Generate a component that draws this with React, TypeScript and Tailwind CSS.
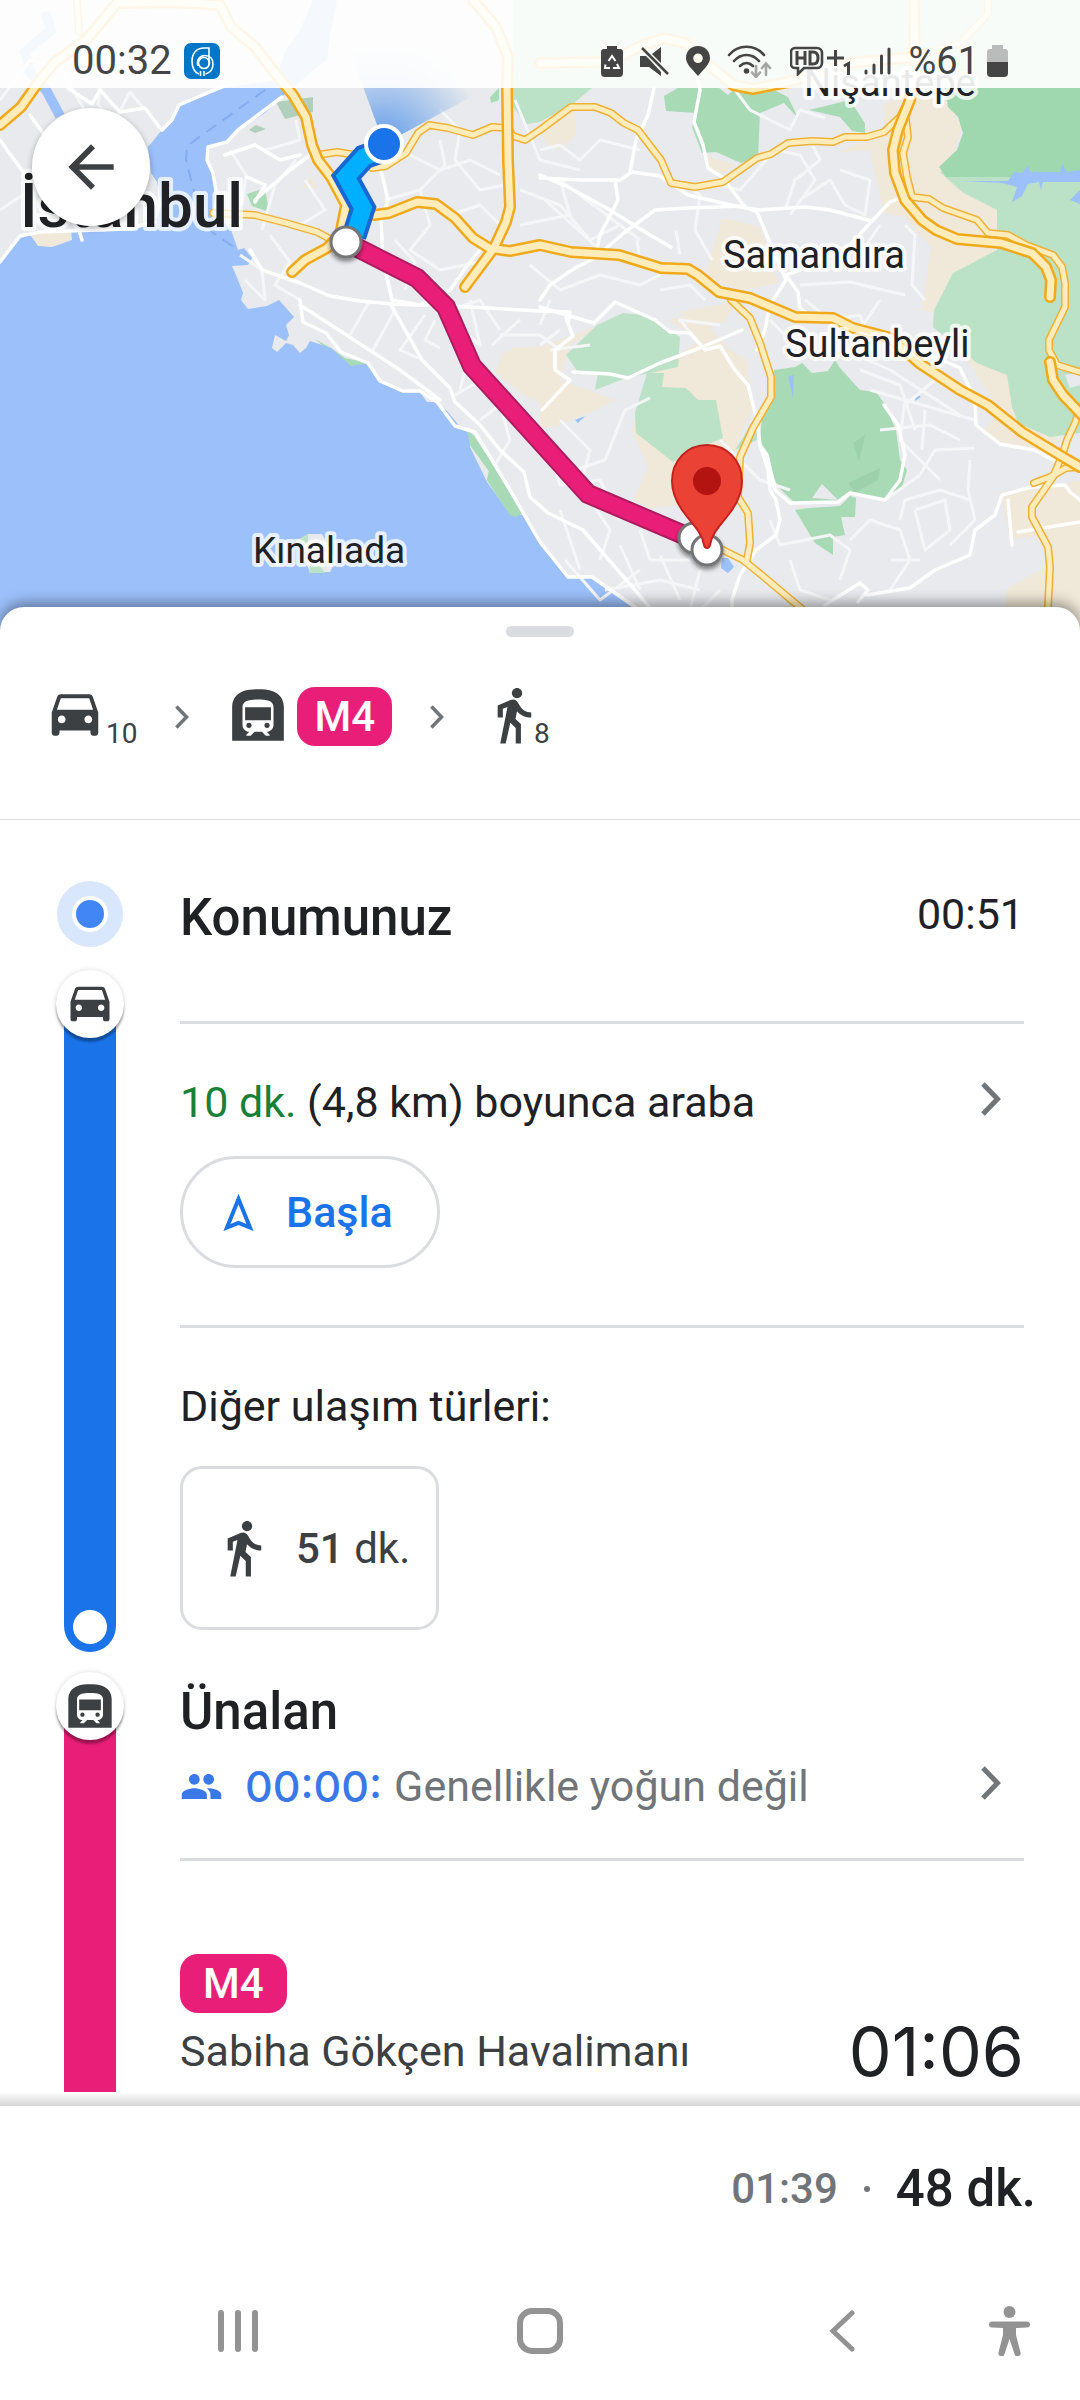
import { useState } from "react";
import type { ReactNode } from "react";
import { MdArrowBack, MdPeople, MdSubway } from "react-icons/md";

const majorRoads = [
  "M0 125L21 107L40 80L55 62L86 40L103 20L117 3L172 2L220 5L231 27L255 47L275 73L293 95L306 117L312 145L318 160L331 177L346 205L340 235L327 248L305 260L292 272",
  "M473 0L496 27L508 57L507 88L508 160L510 207L506 222L494 248L465 287",
  "M374 215L389 213L417 202L436 204L455 218L473 238L489 248L510 251L540 245L571 252L619 255L661 268L688 269L698 275L719 292L750 298L795 317L833 318L853 328L891 338L919 363L960 390L988 405L1022 432L1063 457L1080 467",
  "M914 0L915 67L910 100L898 130L893 150L895 173L905 200L922 220L936 230L957 239L1001 243L1032 253L1046 267L1051 280L1050 297",
  "M540 63L609 62L643 45L664 38L685 43L709 65L733 85L753 89L788 82L850 63L914 57",
  "M1050 362L1053 380L1063 395L1082 415",
];

const minorHighways = [
  "M213 213L255 215L286 223L317 232L332 240",
  "M317 155L337 152L355 155L372 168L386 166L406 153L418 133L429 125L448 128L473 135L492 127L508 128L513 136L525 140L540 130L571 107L595 107L611 113L624 123L638 130L661 160L671 183L695 187L723 182L757 158L771 154L788 143L812 141L833 142L845 137L867 137L884 132L900 117L910 97",
  "M905 112L908 137L903 153L907 177L912 197L929 199L943 208L977 220L988 233L1008 235L1026 245L1053 255L1062 267L1065 283L1065 307L1049 340L1049 350L1057 365L1080 372",
  "M1078 415L1075 423L1067 440L1063 453L1053 477L1032 507L1032 517L1048 547L1050 567L1048 607L1048 640",
  "M1034 483L1050 477L1066 468L1080 467",
  "M731 300L750 318L760 343L771 377L771 397L753 428L740 457L738 497L748 513L750 543L747 560",
  "M719 548L743 560L764 577L802 609L830 640",
  "M77 0L79 32",
  "M988 0L988 14L960 43L914 57",
];

const streets = [
  "M0 262L20 236L40 232L127 229L155 222",
  "M162 130L172 120L179 105L224 86",
  "M0 140L26 176L62 185M30 115L55 150L82 240M68 88L92 104L100 90L120 112L145 108L160 128",
  "M282 97L238 130L227 142L208 147L207 160L213 173L217 197L215 213",
  "M300 300L303 322L326 333L341 352L368 363L380 381L403 391L420 391L437 402L455 426L475 432L510 490L540 542L568 577L592 577L635 607L660 640",
  "M300 305L345 334L400 370L440 400M391 305L422 360L450 388L455 402L480 425L500 450L524 472L530 497L548 513L583 530L635 590L660 620",
  "M381 170L388 200L381 220L383 260L392 300L420 305L450 290L470 262L480 250",
  "M250 250L262 270L300 283L330 296L360 301L392 304L470 307L540 311L570 312L568 322",
  "M255 200L290 170L310 155M247 177L265 185L255 202M225 155L255 145L280 160L300 155",
  "M540 175L570 188L610 210L650 235L671 247M540 178L580 180L620 180L632 172L660 176L688 195L740 207L759 210L805 207L830 210L872 221L890 202L900 198",
  "M654 88L648 115L636 140L630 172M697 76L700 90L694 122L703 145L708 168L722 177L745 207L757 212L773 250L786 280L770 305L765 330L757 350",
  "M540 300L550 285L575 268L595 258L600 235L618 200L615 180M595 258L625 232L655 210L688 208L745 206",
  "M872 221L850 245L800 270L786 275L798 292L800 308L812 318",
  "M540 307L566 315L594 323L615 302L655 320L670 332L690 333L705 350L720 346L735 370L748 385L757 420L760 445L768 470L770 490L776 500L780 520L776 535L756 550L740 575L732 600L732 610",
  "M566 318L573 336L555 350L555 370L570 380L542 410",
  "M573 372L610 374L628 378L660 363L700 348L742 330",
  "M760 445L767 455L775 490L790 503L838 502L850 493L885 500L900 480L905 455L898 425L884 405",
  "M919 350L960 368L975 400L976 425L1000 444L1034 450L1063 465",
  "M867 595L910 588L935 570L970 555L975 530L995 515L1002 495L1032 487L1065 485L1070 492L1080 500M1008 500L1012 545M1018 532L1080 522",
  "M730 610L725 640M825 605L860 583L868 590L858 602",
];

const lanes = [
  "M0 100L30 60L62 70L90 120M100 88L98 105L115 120L130 92L145 110M120 50L150 70L190 62L210 80M0 210L30 190L62 205",
  "M230 150L246 175L242 205M265 150L300 140L296 120M296 160L275 185L262 230M240 255L262 270L265 300L245 280M270 235L290 262L275 285L300 300M305 180L325 210L300 225",
  "M385 200L420 190L445 165L440 140M420 190L430 225L410 250L440 270L480 262M400 150L440 170L470 160L500 175M440 110L460 130L455 160L480 190L505 185M450 215L480 205L500 225M395 240L415 262L405 290M430 290L450 310L480 300L500 330",
  "M515 100L540 160L580 170M520 190L560 205L590 240L620 225M520 225L570 215L560 180M540 150L560 145L580 160L600 140L640 150M545 200L600 250M560 180L640 240M530 265L560 290L600 275L640 285L660 275",
  "M370 300L350 335M395 310L373 350M425 315L400 350L418 358M435 320L425 340L440 348M455 325L480 345L470 300M520 320L492 345M470 350L460 390M500 335L540 335L560 350M455 395L490 375M480 420L500 405L510 440L495 465",
  "M550 350L590 345M680 180L700 195L695 230L712 260M720 185L740 190L775 150L800 155L815 180L790 215M840 170L870 180L865 215L845 205L830 180L800 200M785 210L795 180L820 160L810 140M735 90L750 110L790 130L800 110L825 118",
  "M660 290L690 285L705 300M640 260L637 240M676 230L680 255M800 285L850 282L905 295M805 300L830 320L860 315L870 345M850 270L880 225M905 225L915 235L912 285L925 300M880 300L860 330",
  "M560 420L590 450L582 480L610 500M575 470L605 460L625 410L650 398M545 440L560 485L600 480L620 520M590 500L610 530L600 560M560 510L580 570M620 545L640 590M640 530L650 560L690 560M660 555L680 600M700 570L690 610M605 590L660 580L700 590M565 560L600 600L640 570",
  "M770 520L780 545L830 535L850 550L840 580M790 560L800 590L830 600M850 540L870 520L900 530L910 560L890 590M900 520L905 500L940 490L970 500M885 500L920 475L935 450L975 448M880 430L930 425L960 440M905 400L900 440L940 480M925 410L922 450M860 370L900 385L915 430M870 390L940 410L975 420M935 380L905 405M845 350L890 370L960 415M970 460L968 490L975 520L950 545M890 560L920 560M915 510L945 500L950 530L925 550L915 510",
  "M560 330L540 345M550 300L540 325M700 345L680 320L720 325M770 320L800 350M720 440L760 480L790 490M690 620L720 590",
];

function RoadGroup({ paths, casing, fill, outer, inner }: { paths: string[]; casing: string; fill: string; outer: number; inner: number }) {
  return (
    <g fill="none" strokeLinecap="round" strokeLinejoin="round">
      {paths.map((d) => <path key={d} d={d} stroke={casing} strokeWidth={outer} />)}
      {paths.map((d) => <path key={d + "i"} d={d} stroke={fill} strokeWidth={inner} />)}
    </g>
  );
}

function RouteMap() {
  return (
    <svg viewBox="0 0 1080 640" preserveAspectRatio="xMidYMin slice" className="block h-full w-full" role="img" aria-label="Harita">
      <defs>
        <radialGradient id="beam" gradientUnits="userSpaceOnUse" cx="384" cy="144" r="100">
          <stop offset="0" stopColor="#1a73e8" stopOpacity=".65" />
          <stop offset="1" stopColor="#1a73e8" stopOpacity="0" />
        </radialGradient>
        <filter id="markerShadow" x="-50%" y="-50%" width="200%" height="200%">
          <feDropShadow dx="0" dy="3" stdDeviation="2" floodOpacity=".45" />
        </filter>
      </defs>
      <rect width="1080" height="640" fill="#e8eaed" />

      {/* dry land */}
      <g fill="#f0e8d8">
        <path d="M884 104L905 97L946 100L962 127L953 153L940 167L962 192L997 210L997 250L953 273L932 312L922 310L931 247L905 217L884 213L870 150L838 152L884 133Z" />
        <path d="M722 218L760 227L778 283L743 290L705 277Z" />
        <path d="M540 120L576 104L576 135L560 150L545 143ZM580 100L600 88L622 92L640 88L650 98L610 106ZM705 155L735 165L720 175L708 170Z" />
        <path d="M502 354L516 347L540 347L600 325L570 345L560 380L615 400L600 408L560 425L540 428L540 403L525 395L495 373Z" />
        <path d="M668 320L715 310L712 330L728 348L746 360L753 405L735 450L735 500L650 508L633 500L648 467L632 430L650 375L700 340Z" />
        <path d="M28 233L72 230L72 240L52 247L38 246Z" />
        <path d="M960 350L1010 372L1012 408L1060 440L1050 450L1000 445L985 430L1000 410Z" />
        <path d="M1000 492L1035 490L1080 480L1080 640L1005 640L1006 590L1048 565L1040 535L1010 540Z" />
        <path d="M680 312L735 302L725 322L690 330ZM302 188L310 176L318 188Z" />
        <path d="M795 500L830 535L815 540Z" />
      </g>

      {/* parks and forests */}
      <g fill="#a8dab5">
        <path d="M276 102L313 97L313 112L285 119Z" fill="#b0cfbd" />
        <path d="M249 130L256 125L266 129L255 133Z" fill="#b0cfbd" />
        <path d="M247 194L265 188L269 212L252 206Z" />
        <path d="M490 97L499 88L499 100L491 103Z" />
        <path d="M664 96L678 88L719 88L728 95L736 88L774 90L788 97L798 118L784 103L760 113L758 157L741 163L716 152L702 153L692 127L697 113L666 111Z" />
        <path d="M809 110L822 100L850 100L865 123L865 133L852 131L840 117Z" />
        <path d="M774 370L795 367L802 363L812 373L828 371L835 360L840 368L860 390L876 392L884 403L896 430L900 460L907 470L902 487L884 500L850 493L833 503L795 503L778 487L767 460L760 440L762 417L774 397Z" />
        <path d="M795 510L809 508L840 506L850 496L856 498L855 517L841 517L845 535L833 537L833 555L815 543Z" />
        <path d="M315 339L331 348L345 358L368 363L351 367L341 362ZM377 378L390 385L378 382ZM398 392L414 392L405 397Z" />
        <path d="M467 430L474 436L495 468L523 513L516 517L510 515L487 480L489 471L470 445Z" />
      </g>
      <g fill="#bbe2c6">
        <path d="M513 0H1080V88H592L574 103L540 122L527 124L513 107Z" />
        <path d="M940 172L1080 160V433L1050 437L1018 423L1012 407L1007 375L977 363L933 327L934 310L953 273L997 250L997 210L962 192Z" />
        <path d="M566 355L597 325L623 313L643 315L680 337L678 367L626 378L595 390L598 373L578 372Z" />
        <path d="M647 373L664 373L662 387L686 388L698 400L716 400L723 438L695 450L673 462L636 433L635 413Z" />
        <path d="M735 450L757 415L757 440Z" />
      </g>
      <path d="M592 88L640 88L650 98L640 110L605 104L580 103ZM774 88H884V104L865 123L850 100L809 110Z" fill="#e8eaed" />
      <path d="M945 88H1080V177H946L939 167L957 150L963 133L958 117L948 107Z" fill="#9fd8af" />
      <path d="M1065 375L1080 372L1080 385L1070 388Z" fill="#e8eaed" />
      <path d="M853 443L865 435L859 462ZM848 483L880 468L878 480L855 493Z" fill="#9dd1ac" />
      <path d="M812 498L822 484L838 500Z" fill="#e8eaed" />

      {/* sea, strait and lakes */}
      <g fill="#9cc0fa">
        <path d="M0 262L21 235L29 233L38 246L52 247L72 240L71 230L127 229L155 222L162 205L157 182L151 173L148 147L162 130L172 120L179 105L224 88L275 80L286 50L300 30L313 0H337L331 30L327 60L310 73L282 97L265 113L238 130L227 142L208 147L207 160L213 173L217 197L215 213L231 230L238 250L244 248L252 258L248 265L232 266L238 280L243 293L241 300L248 309L267 306L279 300L294 317L286 325L289 335L286 341L275 335L272 348L277 352L286 343L293 345L300 353L306 348L310 341L331 348L351 366L368 363L379 382L403 393L420 392L427 402L437 402L448 412L461 428L472 435L470 447L487 482L510 514L523 515L540 545L568 577L592 577L635 607L665 640H0Z" />
        <path d="M962 181L1008 181L1014 172L1022 173L1028 165L1030 172L1060 172L1062 164L1067 172L1080 170L1080 182L1043 182L1041 190L1039 182L1028 184L1022 196L1012 202L1017 187L1002 183Z" />
        <path d="M788 377L794 375L793 398ZM916 393L921 397L915 401ZM722 558L728 558L734 567L728 573L721 568ZM575 420L585 416L578 423ZM1070 200L1080 190L1080 204Z" />
      </g>
      <path d="M467 430L474 436L495 468L523 513L516 517L510 515L487 480L489 471L470 445Z" fill="#a8dab5" />
      <path d="M45 12L51 30L25 52L30 72L46 90L60 116" fill="none" stroke="#9cc0fa" strokeWidth="10" />
      <path d="M265 90L187 146L186 160L195 195L212 232L238 250" fill="none" stroke="#84abf0" strokeWidth="2" strokeDasharray="12 8" />
      <path d="M296 541L308 534L322 534L328 545L336 560L330 572L310 572Z" fill="#e8eaed" />
      <path d="M296 541L308 534L308 545ZM310 566L320 566L325 573L309 573Z" fill="#bbe2c6" />

      <g fill="none" stroke="#f5f6f8" strokeWidth="3" strokeLinejoin="round">
        {lanes.map((d) => <path key={d} d={d} />)}
      </g>
      <g fill="none" stroke="#ffffff" strokeWidth="3.500" strokeLinejoin="round" strokeLinecap="round">
        {streets.map((d) => <path key={d} d={d} />)}
      </g>
      <RoadGroup paths={minorHighways} casing="#eeb136" fill="#ffecba" outer={8} inner={5} />
      <RoadGroup paths={majorRoads} casing="#f0a91b" fill="#ffecba" outer={12} inner={7} />

      <path d="M384 144L346 40H500L480 92Z" fill="url(#beam)" />

      {/* route legs */}
      <g fill="none" strokeLinejoin="miter">
        <path d="M384 150L364 157L346 177L363 208L354 236" stroke="#1967d2" strokeWidth="25" />
        <path d="M384 150L364 157L346 177L363 208L354 236" stroke="#00b0ff" strokeWidth="17" />
        <path d="M346 242L417 278L446 307L472 366L588 494L691 538" stroke="#ae1b5e" strokeWidth="20" />
        <path d="M346 242L417 278L446 307L472 366L588 494L691 538" stroke="#e91e78" strokeWidth="16" />
      </g>
      <g fill="#ffffff" stroke="#757575" strokeWidth="3" filter="url(#markerShadow)">
        <circle cx="346" cy="242" r="15" />
        <circle cx="694" cy="538" r="15" />
        <circle cx="707" cy="550" r="15" />
      </g>
      <circle cx="384" cy="144" r="18" fill="#1a73e8" stroke="#ffffff" strokeWidth="4" />

      <g fill="#202124" stroke="#ffffff" strokeOpacity=".75" strokeWidth="8" strokeLinejoin="round" paintOrder="stroke" fontFamily="Roboto, sans-serif" fontSize="38">
        <text x="20" y="227" fontSize="62" fontWeight="500">İstanbul</text>
        <text x="804" y="96">Nişantepe</text>
        <text x="723" y="268">Samandıra</text>
        <text x="785" y="357">Sultanbeyli</text>
        <text x="253" y="563" fontSize="37">Kınalıada</text>
      </g>

      <path d="M707 445c-20 0-35 16-35 36c0 14 6 24 13 33c9 12 17 19 19 31c1 4 5 4 6 0c2-12 10-19 19-31c7-9 13-19 13-33c0-20-15-36-35-36z" fill="#ea4335" stroke="#c5221f" strokeWidth="2" />
      <circle cx="707" cy="481" r="14" fill="#b31412" />
    </svg>
  );
}

function CarIcon({ className }: { className: string }) {
  return (
    <svg viewBox="0 0 24 24" fill="currentColor" className={className} aria-hidden="true">
      <path d="M18.92 5.01C18.72 4.42 18.16 4 17.5 4h-11c-.66 0-1.21.42-1.42 1.01L3 11v8c0 .55.45 1 1 1h1c.55 0 1-.45 1-1v-1h12v1c0 .55.45 1 1 1h1c.55 0 1-.45 1-1v-8l-2.08-5.99zM6.85 15.2c-.83 0-1.5-.67-1.5-1.5s.67-1.5 1.5-1.5 1.5.67 1.5 1.5-.67 1.5-1.5 1.5zm10.3 0c-.83 0-1.5-.67-1.5-1.5s.67-1.5 1.5-1.5 1.5.67 1.5 1.5-.67 1.5-1.5 1.5zM5 10l1.5-4.5h11L19 10H5z" />
    </svg>
  );
}

function WalkIcon({ className }: { className: string }) {
  return (
    <svg viewBox="0 0 20 24" fill="currentColor" className={className} aria-hidden="true">
      <path d="M13.5 5.5c1.1 0 2-.9 2-2s-.9-2-2-2-2 .9-2 2 .9 2 2 2zM9.8 8.9L7 23h2.1l1.8-8 2.1 2v6h2v-7.5l-2.1-2 .6-3C14.8 12 16.8 13 19 13v-2c-1.9 0-3.5-1-4.3-2.4l-1-1.6c-.4-.6-1-1-1.7-1-.3 0-.5.1-.8.1L6 8.3V13h2V9.6l1.8-.7" />
    </svg>
  );
}

function Chevron({ className }: { className: string }) {
  return (
    <svg viewBox="0 0 20 34" fill="none" stroke="currentColor" strokeWidth="5" className={className} aria-hidden="true">
      <path d="M2 2L16.500 17L2 32" />
    </svg>
  );
}

function StatusBar() {
  return (
    <div className="absolute inset-x-0 top-0 flex h-[88px] items-center justify-between bg-white/90 px-[72px] pt-[34px] text-[#454545]">
      <div className="flex items-center gap-3">
        <span className="text-[40px] leading-none">00:32</span>
        <svg viewBox="0 0 36 36" className="h-9 w-9" fill="none" stroke="#ffffff" strokeWidth="1.600" aria-hidden="true">
          <rect width="36" height="36" rx="7" fill="#0277c8" stroke="none" />
          <path d="M16.500 33V28M20 33V28M15 31C10 29 8 24 8 18C8 10 13 5 20 5H25V22" />
          <circle cx="20" cy="20" r="5.500" />
          <path d="M14 23C12 17 16 12.500 21 12.500C26 12.500 29 16 29 21C29 26 26 30 21.500 31" />
        </svg>
      </div>
      <div className="flex items-center gap-[17px]">
        <svg viewBox="0 0 22 32" className="h-8 w-[22px]" fill="currentColor" aria-hidden="true">
          <path d="M6 1h10v3h3a3 3 0 0 1 3 3v21a4 4 0 0 1-4 4H4a4 4 0 0 1-4-4V7a3 3 0 0 1 3-3h3z" />
          <path d="M7.500 16L11 11L14.500 16M16 19L18 23H12M4.500 19.500L4 23H9" fill="none" stroke="#ffffff" strokeWidth="2" />
        </svg>
        <svg viewBox="0 0 29 30" className="h-[30px] w-[29px]" fill="currentColor" aria-hidden="true">
          <path d="M0 10h6l4 4L21 26v4L9 21H0zM21 1v16L12 8z" />
          <path d="M2 2L28 28" stroke="currentColor" strokeWidth="2.500" />
        </svg>
        <svg viewBox="0 0 24 30" className="h-[30px] w-6" fill="currentColor" fillRule="evenodd" aria-hidden="true">
          <path d="M12 0C5 0 0 5 0 12C0 18 6 23 12 30C18 23 24 18 24 12C24 5 19 0 12 0zM12 7.500a4.800 4.800 0 1 1 0 9.600a4.800 4.800 0 0 1 0-9.600z" />
        </svg>
        <svg viewBox="0 0 46 34" className="h-[34px] w-[46px]" fill="none" stroke="currentColor" strokeWidth="2.600" strokeLinecap="round" aria-hidden="true">
          <path d="M2 11C11 0 28 0 37 11M7 17C14 9 25 9 32 17M13 22C17 18 22 18 26 22" />
          <circle cx="19.500" cy="27" r="1.500" fill="currentColor" />
          <path d="M29 22V32M25 28.500L29 33L33 28.500M39 31V20M35 24L39 19.500L43 24" stroke="#a3a6a3" />
        </svg>
        <div className="flex items-center gap-3">
          <svg viewBox="0 0 62 30" className="h-[30px] w-[62px]" fill="none" stroke="currentColor" strokeWidth="2.600" aria-hidden="true">
            <path d="M8 22H5a4 4 0 0 1-4-4V6a4 4 0 0 1 4-4H27a5 5 0 0 1 5 5V17a5 5 0 0 1-5 5H14L8 28z" />
            <path d="M7 5V19M15 5V19M7 12H15M20 6V18H23C27 18 28 15 28 12S27 6 23 6z" strokeWidth="3" />
            <path d="M37 12H54M45.500 4V20M54 20L58.500 17.500V29" strokeWidth="3" />
          </svg>
          <svg viewBox="0 0 27 28" className="h-7 w-[27px]" stroke="currentColor" strokeWidth="3" strokeLinecap="round" aria-hidden="true">
            <path d="M2 24V26M10 18V26M17.500 9V26M25 2V26" />
          </svg>
        </div>
        <div className="flex items-center gap-2">
          <span className="text-[38px] leading-none">%61</span>
          <svg viewBox="0 0 21 32" className="h-8 w-[21px]" aria-hidden="true">
            <path d="M5 0h11v4h2a3 3 0 0 1 3 3v10H0V7a3 3 0 0 1 3-3h2z" fill="#b9bcba" />
            <path d="M0 17h21v11a4 4 0 0 1-4 4H4a4 4 0 0 1-4-4z" fill="#454545" />
          </svg>
        </div>
      </div>
    </div>
  );
}

function RailIcon({ children }: { children: ReactNode }) {
  return (
    <div className="z-10 flex h-[68px] w-[68px] shrink-0 items-center justify-center rounded-full bg-white text-[#3c4043] shadow-[0_4px_2px_rgba(0,0,0,0.3),0_0_5px_rgba(0,0,0,0.15)]">
      {children}
    </div>
  );
}

export default function App() {
  const [expanded, setExpanded] = useState(true);

  return (
    <div className="flex min-h-screen flex-col bg-white font-['Roboto',sans-serif] text-[#202124]">
      <header className="relative h-[640px] overflow-hidden">
        <RouteMap />
        <StatusBar />
        <button type="button" aria-label="Geri" className="absolute left-8 top-[108px] flex h-[118px] w-[118px] items-center justify-center rounded-full bg-white text-[68px] text-[#3c4043] shadow-[0_2px_6px_rgba(0,0,0,0.3)]">
          <MdArrowBack />
        </button>
      </header>

      <main className="relative -mt-[33px] rounded-t-[24px] bg-white shadow-[0_-4px_14px_rgba(0,0,0,0.4)]">
        <button
          type="button"
          aria-label="Ayrıntılar"
          aria-expanded={expanded}
          onClick={() => setExpanded(!expanded)}
          className="mx-auto block pt-[19px]"
        >
          <span className="block h-[11px] w-[68px] rounded-full bg-[#dadce0]" />
        </button>

        {/* Trip summary */}
        <div className="flex items-center border-b border-[#dadce0] pb-[73px] pl-11 pt-[50px] text-[#3c4043]">
          <div className="flex h-[59px] items-end">
            <CarIcon className="h-[62px] w-[62px]" />
            <span className="text-[28px] leading-6">10</span>
          </div>
          <Chevron className="mx-[38px] h-6 w-[14px] text-[#70757a]" />
          <div className="flex h-[59px] items-end gap-2">
            <MdSubway className="h-[62px] w-[62px]" />
            <span className="flex h-[59px] items-center rounded-[18px] bg-[#e91e78] px-[17px] text-[42px] font-medium leading-none text-white">M4</span>
          </div>
          <Chevron className="mx-[38px] h-6 w-[14px] text-[#70757a]" />
          <div className="flex h-[59px] items-end">
            <WalkIcon className="h-[62px] w-[52px]" />
            <span className="text-[28px] leading-6">8</span>
          </div>
        </div>

        {/* Car leg */}
        <section className="flex">
          <div className="flex w-[180px] shrink-0 flex-col items-center pt-[61px]">
            <div className="mb-[23px] flex h-[66px] w-[66px] shrink-0 items-center justify-center rounded-full bg-[#d9e7fc]">
              <div className="h-9 w-9 rounded-full border-4 border-white bg-[#4285f4]" />
            </div>
            <RailIcon><CarIcon className="h-[52px] w-[52px]" /></RailIcon>
            <div className="-mt-[34px] flex w-[52px] flex-1 items-end justify-center rounded-b-full bg-[#1a73e8] pb-2">
              <div className="h-[34px] w-[34px] rounded-full bg-white" />
            </div>
          </div>
          <div className="min-w-0 flex-1 pb-[22px] pr-14">
            <div className="flex items-start justify-between border-b-[3px] border-[#dadce0] pb-[75px] pt-[70px]">
              <h2 className="text-[51px] font-medium leading-[56px]">Konumunuz</h2>
              <span className="text-[43px] leading-[48px]">00:51</span>
            </div>
            <div className="border-b-[3px] border-[#dadce0] pb-[57px] pt-[54px]">
              <button type="button" className="flex w-full items-center justify-between pr-[23px] text-left">
                <span className="text-[43px] leading-[48px]"><span className="text-[#188038]">10 dk.</span> (4,8 km) boyunca araba</span>
                <Chevron className="h-10 w-5 pb-[6px] text-[#70757a]" />
              </button>
              <button type="button" className="mt-[30px] flex h-28 w-[260px] items-center gap-8 rounded-full border-[3px] border-[#dadce0] pl-10 text-[43px] font-medium text-[#1a73e8]">
                <svg viewBox="0 0 31 38" className="h-[38px] w-[31px]" fill="none" stroke="currentColor" strokeWidth="4" aria-hidden="true">
                  <path d="M15.500 6L27 34.500L15.500 30L4 34.500Z" />
                </svg>
                Başla
              </button>
            </div>
            <p className="pt-[54px] text-[43px] leading-[48px]">Diğer ulaşım türleri:</p>
            <button type="button" className="mt-9 flex h-[164px] w-[259px] items-center rounded-[22px] border-[3px] border-[#dadce0] pl-[29px] text-[42px] text-[#3c4043]">
              <WalkIcon className="h-[62px] w-[52px]" />
              <span className="pl-8"><b className="font-medium">51</b> dk.</span>
            </button>
          </div>
        </section>

        {/* Metro leg */}
        <section className="flex">
          <div className="flex w-[180px] shrink-0 flex-col items-center pt-5">
            <RailIcon><MdSubway className="h-[52px] w-[52px]" /></RailIcon>
            <div className="-mt-[34px] w-[52px] flex-1 bg-[#e91e78]" />
          </div>
          <div className="min-w-0 flex-1 pb-[17px] pr-14 pt-8">
            <h2 className="text-[51px] font-medium leading-[56px]">Ünalan</h2>
            <button type="button" className="mt-[22px] flex w-full items-center pr-[23px] text-left text-[43px] leading-[48px]">
              <MdPeople className="h-[43px] w-[43px] text-[#3b78e7]" />
              <span className="flex flex-1 gap-3 pl-[22px] text-[#70757a]">
                <b className="font-['Inter',sans-serif] font-medium text-[#3b78e7]">00:00:</b>
                <span>Genellikle yoğun değil</span>
              </span>
              <Chevron className="h-10 w-5 pb-[6px] text-[#70757a]" />
            </button>
            <div className="mt-12 flex items-end justify-between border-t-[3px] border-[#dadce0] pt-[93px]">
              <div className="flex flex-col items-start gap-[14px]">
                <span className="flex h-[59px] items-center rounded-[18px] bg-[#e91e78] px-[23px] text-[42px] font-medium leading-none text-white">M4</span>
                <span className="text-[43px] leading-[48px] text-[#3c4043]">Sabiha Gökçen Havalimanı</span>
              </div>
              <span className="font-['Inter',sans-serif] text-[68px] leading-[48px]">01:06</span>
            </div>
          </div>
        </section>
      </main>

      <div className="relative h-[14px] bg-linear-to-b from-white to-[#d4d4d4]" />

      <footer className="flex items-center justify-end pb-[46px] pr-11 pt-[55px] leading-[56px]">
        <span className="text-[42px] font-medium text-[#70757a]">01:39</span>
        <span className="mx-[26px] h-[6px] w-[6px] rounded-full bg-[#70757a]" />
        <span className="text-[51px] font-medium">48 dk.</span>
      </footer>

      <nav className="grid h-[136px] grid-cols-[87px_1fr_1fr_1fr_87px] items-center justify-items-center text-[#939393]">
        <button type="button" aria-label="Son uygulamalar" className="col-start-2">
          <svg viewBox="0 0 40 42" className="h-[42px] w-10" stroke="currentColor" strokeWidth="6" strokeLinecap="round" aria-hidden="true">
            <path d="M3 3V39M20 3V39M37 3V39" />
          </svg>
        </button>
        <button type="button" aria-label="Ana ekran">
          <svg viewBox="0 0 46 46" className="h-[46px] w-[46px]" fill="none" stroke="currentColor" strokeWidth="6" aria-hidden="true">
            <rect x="3" y="3" width="40" height="40" rx="12" />
          </svg>
        </button>
        <button type="button" aria-label="Geri git">
          <svg viewBox="0 0 26 42" className="h-[42px] w-[26px]" fill="none" stroke="currentColor" strokeWidth="5" strokeLinecap="round" aria-hidden="true">
            <path d="M23 3L4 21L23 39" />
          </svg>
        </button>
        <button type="button" aria-label="Erişilebilirlik" className="mr-[50px] justify-self-end">
          <svg viewBox="0 0 41 50" className="h-[50px] w-[41px]" fill="currentColor" aria-hidden="true">
            <circle cx="20.500" cy="6" r="6" />
            <path d="M3 15.500H38a3 3 0 0 1 3 3a3 3 0 0 1-3 3L27 22V29L31.500 46.500a3 3 0 0 1-6 1.500L20.500 33L15.500 48a3 3 0 0 1-6-1.500L14 29V22L3 21.500a3 3 0 0 1-3-3a3 3 0 0 1 3-3z" />
          </svg>
        </button>
      </nav>
    </div>
  );
}
